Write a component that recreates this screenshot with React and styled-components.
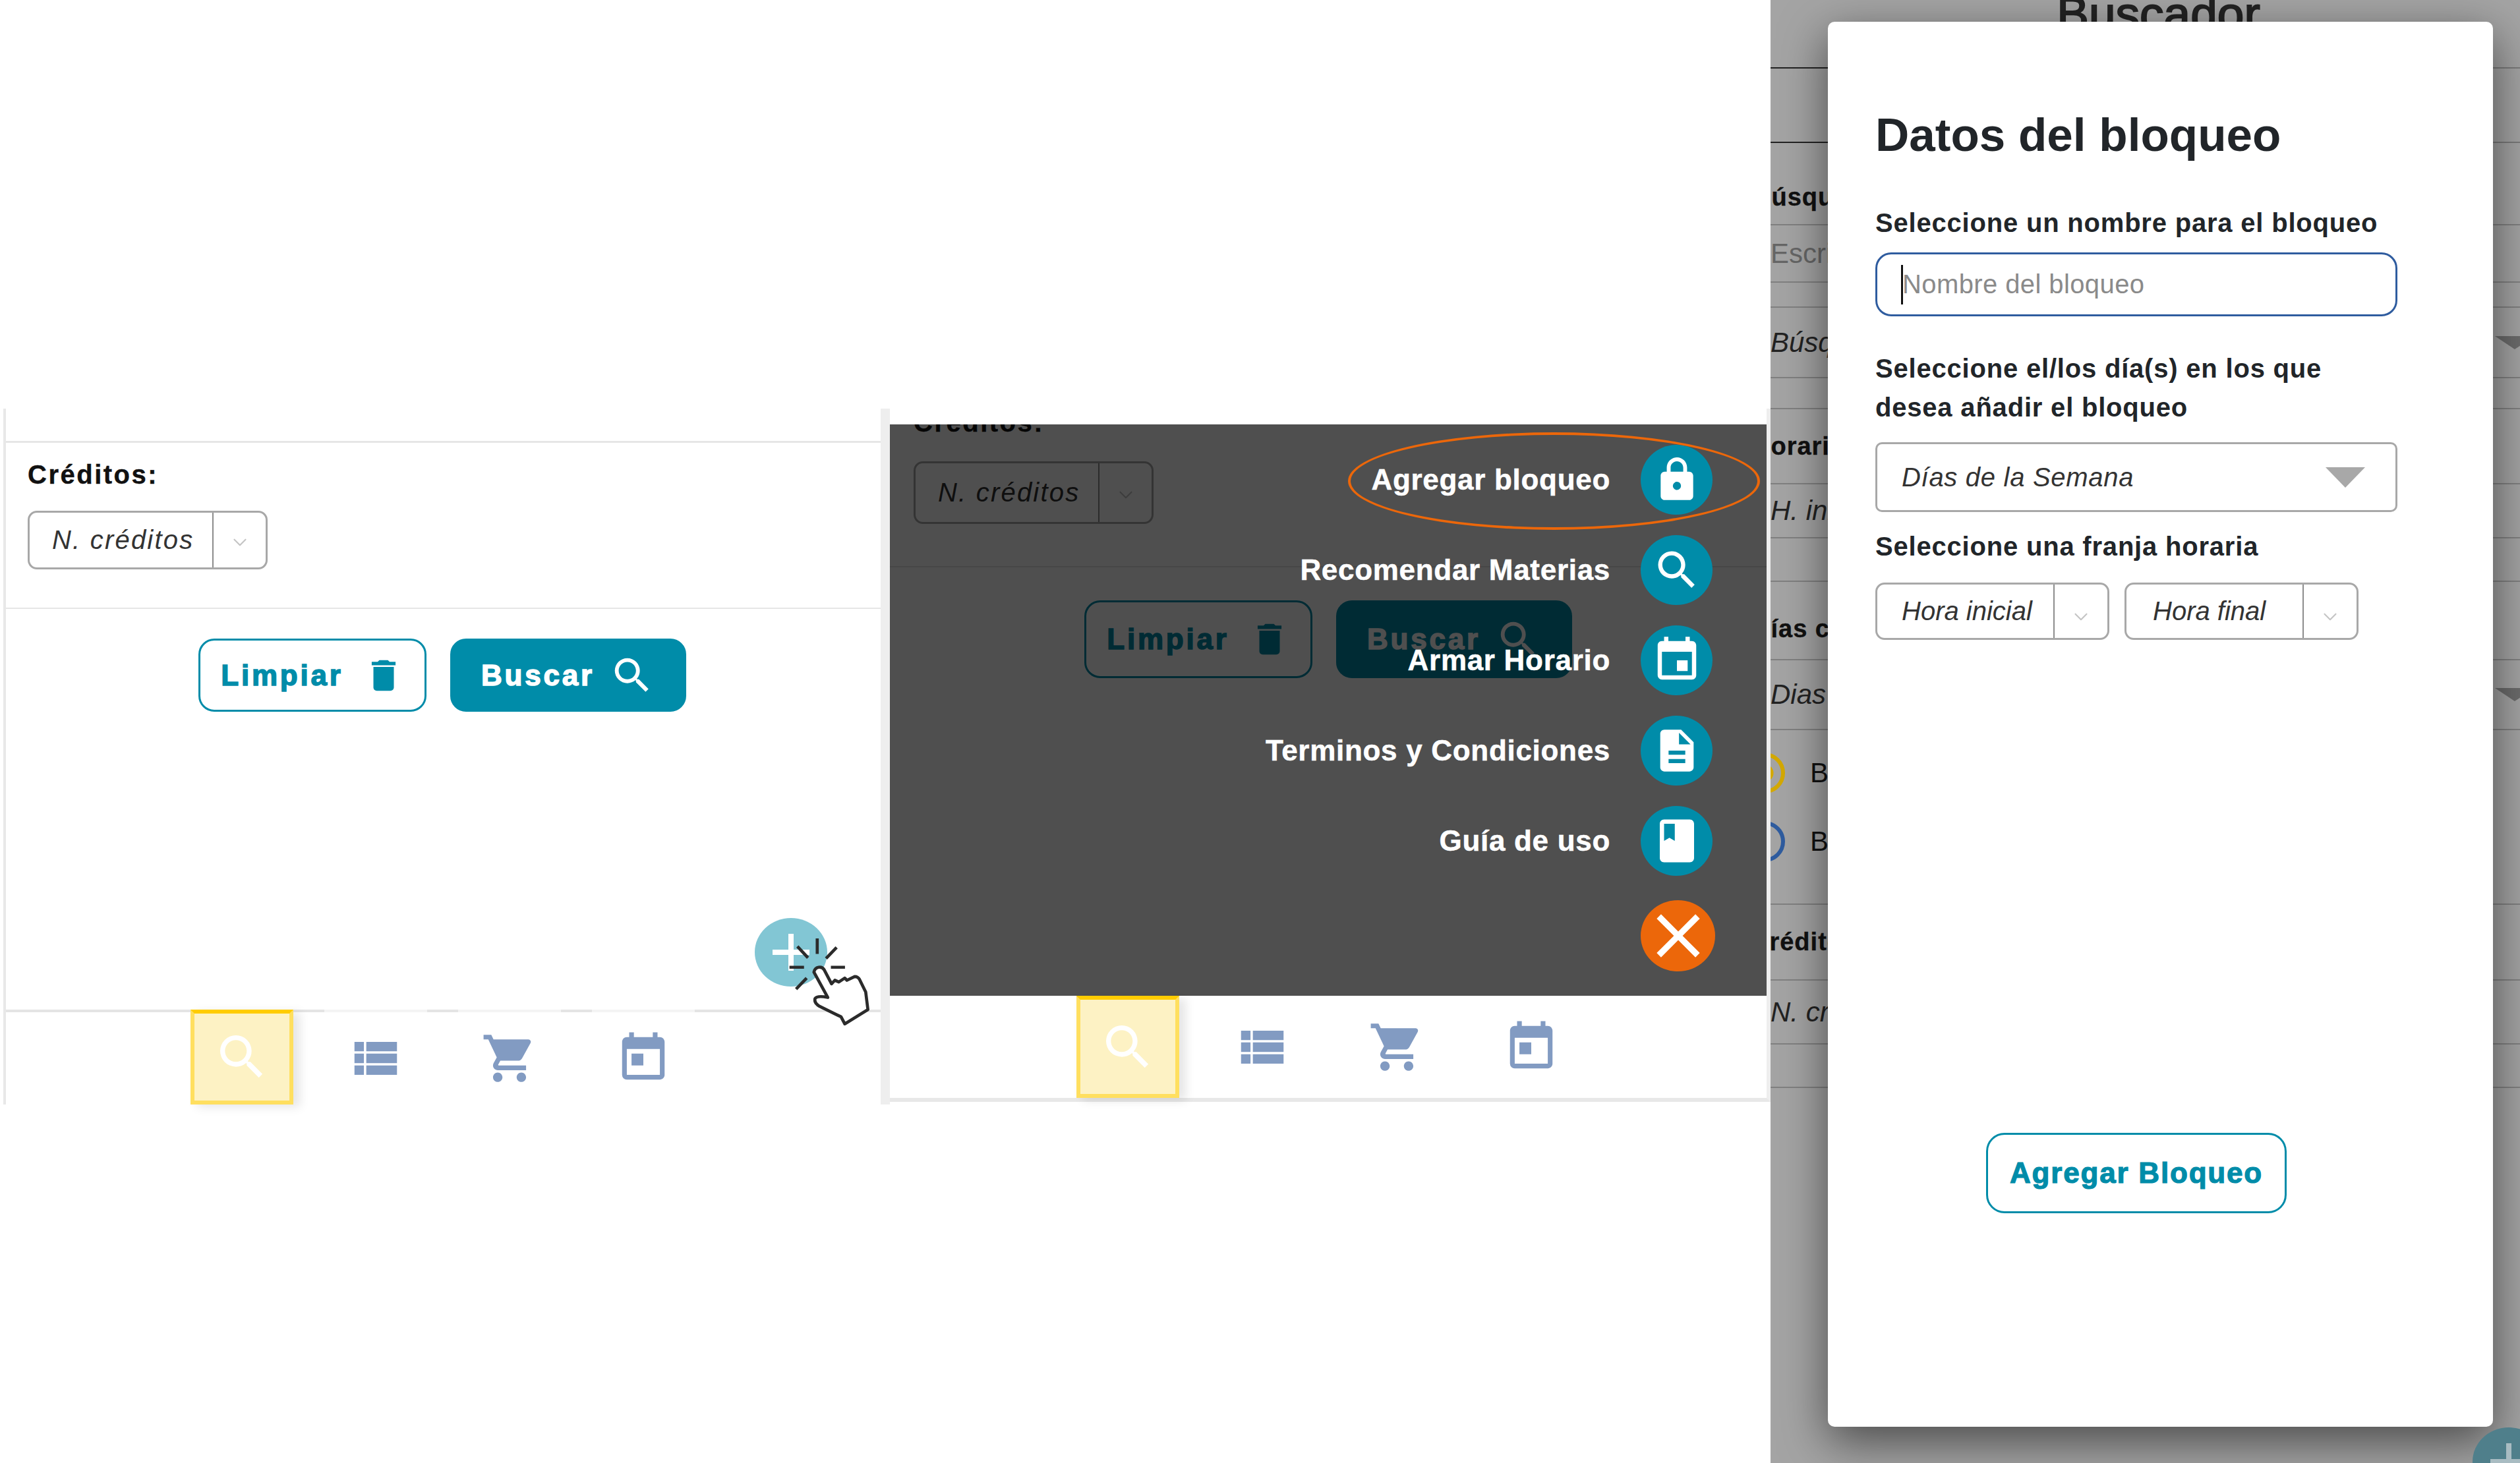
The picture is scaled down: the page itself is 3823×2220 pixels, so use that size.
import React from "react";
import styled, { createGlobalStyle } from "styled-components";
import {
  MdSearch, MdViewList, MdShoppingCart, MdToday, MdEvent, MdLock,
  MdDescription, MdBook, MdClose, MdDelete, MdAdd,
} from "react-icons/md";
import { FiChevronDown } from "react-icons/fi";

const teal = "#008ca9";

const GlobalStyle = createGlobalStyle`
  html, body { margin: 0; padding: 0; background: #fff; }
  * { box-sizing: border-box; }
  body { font-family: "Liberation Sans", Arial, sans-serif; color: #111; }
`;

const Page = styled.div`
  display: flex;
  width: 3823px;
  height: 2220px;
  overflow: hidden;
`;

const Column = styled.div`
  width: ${(p) => p.$w}px;
  padding-top: 620px;
  padding-left: ${(p) => p.$left}px;
  flex: none;
`;

const Frame = styled.div`
  position: relative;
  display: flex;
  flex-direction: column;
  height: ${(p) => p.$h}px;
  border-left: ${(p) => p.$bl}px solid #e8e8e8;
  border-right: ${(p) => p.$br}px solid #eeeeee;
  border-bottom: ${(p) => p.$bb}px solid #e8e8e8;
`;

const TopGap = styled.div`
  height: ${(p) => p.$h}px;
  flex: none;
  border-bottom: ${(p) => p.$line ? "3px solid #e6e6e6" : "none"};
`;

const Section = styled.div`
  padding: ${(p) => (p.$tall ? "0 36px 64px" : "25px 33px 58px")};
  border-bottom: 2px solid #e6e6e6;
`;

const FieldLabel = styled.div`
  font-size: 40px;
  font-weight: 700;
  line-height: 46px;
  letter-spacing: 2.5px;
  -webkit-text-stroke: 0.4px #111;
  color: #111;
  margin-top: ${(p) => (p.$tall ? "-26px" : "0")};
`;

const ComboBox = styled.div`
  display: flex;
  align-items: stretch;
  width: ${(p) => p.$w}px;
  height: ${(p) => p.$h}px;
  margin-top: ${(p) => p.$mt || 0}px;
  border: 3px solid #a8a8a8;
  border-radius: 14px;
  background: #fff;
`;

const ComboText = styled.div`
  display: flex;
  align-items: center;
  width: ${(p) => p.$w}px;
  padding-left: ${(p) => p.$pl}px;
  flex: none;
  font-size: 40px;
  font-style: italic;
  letter-spacing: ${(p) => p.$ls || 0}px;
  color: #333;
  white-space: nowrap;
  border-right: 2px solid #8c8c8c;
`;

const ComboArrow = styled.div`
  flex: 1;
  display: flex;
  align-items: center;
  justify-content: center;
  padding-top: ${(p) => p.$low ? 16 : 6}px;
  color: #c4c4c4;
`;

const ButtonRow = styled.div`
  display: flex;
  justify-content: center;
  gap: 36px;
  padding-top: ${(p) => (p.$tall ? 50 : 45)}px;
  padding-right: ${(p) => (p.$tall ? 0 : 3)}px;
`;

const ActionButton = styled.div`
  display: flex;
  align-items: center;
  justify-content: center;
  gap: ${(p) => p.$gap}px;
  width: ${(p) => p.$w}px;
  height: ${(p) => (p.$tall ? 118 : 111)}px;
  border: 3px solid ${teal};
  border-radius: 24px;
  background: ${(p) => (p.$solid ? teal : "#fff")};
  color: ${(p) => (p.$solid ? "#fff" : teal)};
  font-size: 44px;
  font-weight: 700;
  letter-spacing: 3.8px;
  -webkit-text-stroke: 1.5px currentColor;
`;

const ButtonIcon = styled.span`
  display: flex;
  -webkit-text-stroke: 0;
`;

const Spacer = styled.div`
  flex: 1;
`;

const NavBar = styled.div`
  display: flex;
  flex: none;
  gap: ${(p) => p.$gap}px;
  height: ${(p) => p.$h}px;
  padding-left: ${(p) => p.$pl}px;
  border-top: ${(p) => (p.$line ? "4px solid #e4e4e4" : "none")};
`;

const NavTab = styled.div`
  display: flex;
  align-items: center;
  justify-content: center;
  width: 156px;
  margin-top: ${(p) => (p.$line ? -4 : 0)}px;
  color: ${(p) => (p.$active ? "#fff" : "#829bc2")};
  background: ${(p) => (p.$active ? "#fdf2c4" : "transparent")};
  border: ${(p) => (p.$active ? "6px solid #ffdf5f" : "none")};
  border-top: ${(p) => (p.$active ? "6px solid #fc0" : p.$line ? "4px solid #f4f4f4" : "none")};
  box-shadow: ${(p) => (p.$active ? "10px 4px 14px rgba(0,0,0,.1)" : "none")};
`;

const Fab = styled.div`
  position: absolute;
  width: 110px;
  height: 104px;
  left: ${(p) => p.$x}px;
  top: ${(p) => p.$y}px;
  border-radius: 50%;
  display: flex;
  align-items: center;
  justify-content: center;
  background: ${(p) => p.$bg};
  color: ${(p) => p.$fg};
`;

const HandCursor = styled.svg`
  position: absolute;
  left: 1184px;
  top: 800px;
  width: 127px;
  height: 137px;
`;

const WhiteBand = styled.div`
  height: 24px;
  flex: none;
`;

const Screen = styled.div`
  position: relative;
  height: 867px;
  flex: none;
  overflow: hidden;
`;

const Dimmer = styled.div`
  position: absolute;
  inset: 0;
  display: flex;
  flex-direction: column;
  align-items: flex-end;
  gap: 31px;
  padding: 31px 82px 0 0;
  background: rgba(0, 0, 0, 0.69);
`;

const MenuRow = styled.div`
  display: flex;
  align-items: center;
  gap: 46px;
  height: 106px;
`;

const MenuLabel = styled.div`
  font-size: 44px;
  font-weight: 700;
  letter-spacing: 0.7px;
  -webkit-text-stroke: 0.5px #fff;
  color: #fff;
  white-space: nowrap;
`;

const MenuCircle = styled.div`
  width: 109px;
  height: 106px;
  border-radius: 50%;
  display: flex;
  align-items: center;
  justify-content: center;
  background: ${teal};
  color: #fff;
`;

const CloseCircle = styled(MenuCircle)`
  width: 113px;
  height: 108px;
  margin: 6px -4px 0 0;
  background: #ec670a;
`;

const Highlight = styled.div`
  position: absolute;
  left: 695px;
  top: 12px;
  width: 625px;
  height: 148px;
  border: 4px solid #ec670a;
  border-radius: 50%;
`;

/* modal column */
const Backdrop = styled.div`
  position: relative;
  width: 1137px;
  flex: none;
  height: 2220px;
  overflow: hidden;
  background: #a4a4a4;
`;

const BgRow = styled.div`
  display: flex;
  align-items: center;
  height: ${(p) => p.$h}px;
  padding-top: ${(p) => p.$pt || 0}px;
  overflow: hidden;
  border-bottom: 2px solid #808080;
  border-image: ${(p) => (p.$dark ? "linear-gradient(90deg,#222 50%,#7a7a7a 50%) 1" : "none")};
  white-space: nowrap;
`;

const BgHeading = styled.div`
  width: 100%;
  text-align: center;
  margin: -62px 0 0 40px;
  font-size: 73px;
  font-weight: 400;
  -webkit-text-stroke: 2px #222;
  color: #222;
`;

const BgLabel = styled.div`
  margin-left: ${(p) => p.$shift}px;
  font-size: 38px;
  font-weight: 700;
  letter-spacing: 1px;
  -webkit-text-stroke: 0.4px #111;
  color: #111;
`;

const BgValue = styled.div`
  margin-left: ${(p) => p.$shift}px;
  font-size: 42px;
  font-style: ${(p) => (p.$plain ? "normal" : "italic")};
  color: ${(p) => (p.$plain ? "#666" : "#222")};
`;

const BgTriangle = styled.div`
  margin-left: auto;
  margin-right: -22px;
  border-left: 30px solid transparent;
  border-right: 30px solid transparent;
  border-top: 20px solid #6c6c6c;
`;

const RadioBlock = styled.div`
  display: flex;
  flex-direction: column;
  gap: 42px;
  height: 265px;
  padding-top: 34px;
  overflow: hidden;
  border-bottom: 2px solid #808080;
`;

const RadioRow = styled.div`
  display: flex;
  align-items: center;
  gap: 38px;
  height: 62px;
  margin-left: -40px;
  font-size: 42px;
  color: #111;
`;

const RadioDot = styled.span`
  width: 62px;
  height: 62px;
  border-radius: 50%;
  border: 6px solid ${(p) => p.$c};
  background: ${(p) => (p.$on ? `radial-gradient(circle, ${p.$c} 0 13px, transparent 14px)` : "none")};
`;

const Modal = styled.div`
  position: absolute;
  left: 87px;
  top: 33px;
  width: 1009px;
  height: 2132px;
  display: flex;
  flex-direction: column;
  padding: 132px 145px 0 72px;
  background: #fff;
  border-radius: 10px;
  box-shadow: 0 22px 70px rgba(0, 0, 0, 0.55);
`;

const ModalTitle = styled.div`
  font-size: 71px;
  line-height: 80px;
  font-weight: 700;
  white-space: nowrap;
  color: #212529;
`;

const ModalLabel = styled.div`
  margin-top: ${(p) => p.$mt}px;
  font-size: 40px;
  line-height: 59px;
  font-weight: 700;
  letter-spacing: 0.8px;
  white-space: nowrap;
  color: #212529;
`;

const NameInput = styled.div`
  display: flex;
  align-items: center;
  height: 97px;
  margin-top: 15px;
  padding-left: 36px;
  border: 3px solid #2f5c9f;
  border-radius: 24px;
  font-size: 40px;
  color: #8a8a8a;
  letter-spacing: .4px;
`;

const Caret = styled.span`
  width: 3px;
  height: 60px;
  margin-right: -1px;
  background: #111;
`;

const DaySelect = styled.div`
  display: flex;
  align-items: center;
  justify-content: space-between;
  height: 106px;
  margin-top: 23px;
  padding: 0 46px 0 37px;
  border: 3px solid #a8a8a8;
  border-radius: 10px;
  font-size: 40px;
  font-style: italic;
  letter-spacing: 0.7px;
  color: #333;
`;

const DayArrow = styled.span`
  border-left: 30px solid transparent;
  border-right: 30px solid transparent;
  border-top: 31px solid #a8a8a8;
`;

const ComboRow = styled.div`
  display: flex;
  gap: 23px;
  margin-top: 25px;
`;

const SubmitButton = styled.div`
  align-self: center;
  display: flex;
  align-items: center;
  justify-content: center;
  width: 456px;
  height: 122px;
  margin: 748px 0 0 0;
  border: 3px solid ${teal};
  border-radius: 28px;
  color: ${teal};
  font-size: 44px;
  font-weight: 700;
  letter-spacing: 1.8px;
  -webkit-text-stroke: 1.2px ${teal};
`;

// the same filter block sits under the dark menu in the second shot, a bit taller
const CreditFilter = ({ tall }) => (
  <>
    <Section $tall={tall}>
      <FieldLabel $tall={tall}>Créditos:</FieldLabel>
      <ComboBox $w={364} $h={tall ? 95 : 89} $mt={tall ? 36 : 32}>
        <ComboText $w={279} $pl={34} $ls={2.2}>N. créditos</ComboText>
        <ComboArrow><FiChevronDown size={34} strokeWidth={1.5} /></ComboArrow>
      </ComboBox>
    </Section>
    <ButtonRow $tall={tall}>
      <ActionButton $w={346} $gap={30} $tall={tall}>
        Limpiar
        <ButtonIcon><MdDelete size={62} /></ButtonIcon>
      </ActionButton>
      <ActionButton $w={358} $gap={22} $solid $tall={tall}>
        Buscar
        <ButtonIcon><MdSearch size={70} /></ButtonIcon>
      </ActionButton>
    </ButtonRow>
  </>
);

const BottomNav = ({ h, pl, gap, line }) => (
  <NavBar $h={h} $pl={pl} $gap={gap} $line={line}>
    <NavTab $active $line={line}><MdSearch size={88} /></NavTab>
    <NavTab $line={line}><MdViewList size={86} /></NavTab>
    <NavTab $line={line}><MdShoppingCart size={86} /></NavTab>
    <NavTab $line={line}><MdToday size={86} /></NavTab>
  </NavBar>
);

const menuItems = [
  ["Agregar bloqueo", MdLock, 74],
  ["Recomendar Materias", MdSearch, 76],
  ["Armar Horario", MdEvent, 78],
  ["Terminos y Condiciones", MdDescription, 76],
  ["Guía de uso", MdBook, 78],
];

export default function App() {
  return (
    <>
      <GlobalStyle />
      <Page>
        <Column $w={1350} $left={5}>
          <Frame $h={1056} $bl={4} $br={14} $bb={0}>
            <TopGap $h={52} $line />
            <CreditFilter />
            <Spacer />
            <BottomNav h={144} pl={280} gap={47} line />
            <Fab $x={1136} $y={773} $bg="#82c6d4" $fg="#fff"><MdAdd size={96} /></Fab>
            <HandCursor viewBox="280 210 380 410" fill="none" stroke="#2b2b2b" strokeWidth="14">
              <path d="M420 222V292M330 258L378 310M508 263L460 313M294 353H360M482 353H546M372 402L324 452" />
              <path
                fill="#fff"
                strokeLinejoin="round"
                d="M405 375C410 350 440 345 452 365L485 428L500 412L518 420L545 402L555 412L590 395Q605 395 612 408L640 465L650 545L545 610L528 578L430 530Q405 515 410 495Q420 480 468 490Z"
              />
            </HandCursor>
          </Frame>
        </Column>

        <Column $w={1336} $left={0}>
          <Frame $h={1052} $bl={0} $br={6} $bb={6}>
            <WhiteBand />
            <Screen>
              <CreditFilter tall />
              <Dimmer>
                <Highlight />
                {menuItems.map(([label, Icon, size]) => (
                  <MenuRow key={label}>
                    <MenuLabel>{label}</MenuLabel>
                    <MenuCircle><Icon size={size} /></MenuCircle>
                  </MenuRow>
                ))}
                <CloseCircle><MdClose size={112} /></CloseCircle>
              </Dimmer>
            </Screen>
            <BottomNav h={155} pl={283} gap={48} />
          </Frame>
        </Column>

        <Backdrop>
          <BgRow $h={104} $dark><BgHeading>Buscador</BgHeading></BgRow>
          <BgRow $h={113} $dark />
          <BgRow $h={125} $pt={42}><BgLabel $shift={-27}>Búsqueda</BgLabel></BgRow>
          <BgRow $h={87}><BgValue $shift={0} $plain>Escribir</BgValue></BgRow>
          <BgRow $h={38} />
          <BgRow $h={107}>
            <BgValue $shift={0}>Búsqueda</BgValue>
            <BgTriangle />
          </BgRow>
          <BgRow $h={47} />
          <BgRow $h={114}><BgLabel $shift={-28}>Horario</BgLabel></BgRow>
          <BgRow $h={82}><BgValue $shift={0}>H. inicial</BgValue></BgRow>
          <BgRow $h={66} />
          <BgRow $h={119} $pt={26}><BgLabel $shift={-28}>Días con</BgLabel></BgRow>
          <BgRow $h={106}>
            <BgValue $shift={0}>Dias</BgValue>
            <BgTriangle />
          </BgRow>
          <RadioBlock>
            <RadioRow><RadioDot $c="#d4a900" $on />Bloqueo</RadioRow>
            <RadioRow><RadioDot $c="#2f5c9f" />Bloqueo</RadioRow>
          </RadioBlock>
          <BgRow $h={115}><BgLabel $shift={-30}>Créditos</BgLabel></BgRow>
          <BgRow $h={97}><BgValue $shift={0}>N. créditos</BgValue></BgRow>
          <BgRow $h={66} />
          <Modal>
            <ModalTitle>Datos del bloqueo</ModalTitle>
            <ModalLabel $mt={64}>Seleccione un nombre para el bloqueo</ModalLabel>
            <NameInput><Caret />Nombre del bloqueo</NameInput>
            <ModalLabel $mt={50}>
              Seleccione el/los día(s) en los que<br />desea añadir el bloqueo
            </ModalLabel>
            <DaySelect>
              Días de la Semana
              <DayArrow />
            </DaySelect>
            <ModalLabel $mt={23}>Seleccione una franja horaria</ModalLabel>
            <ComboRow>
              <ComboBox $w={355} $h={87}>
                <ComboText $w={269} $pl={37}>Hora inicial</ComboText>
                <ComboArrow $low><FiChevronDown size={34} strokeWidth={1.5} /></ComboArrow>
              </ComboBox>
              <ComboBox $w={355} $h={87}>
                <ComboText $w={269} $pl={40}>Hora final</ComboText>
                <ComboArrow $low><FiChevronDown size={34} strokeWidth={1.5} /></ComboArrow>
              </ComboBox>
            </ComboRow>
            <SubmitButton>Agregar Bloqueo</SubmitButton>
          </Modal>
          <Fab $x={1065} $y={2166} $bg="#4f7f8b" $fg="#a9bcc2"><MdAdd size={96} /></Fab>
        </Backdrop>
      </Page>
    </>
  );
}
